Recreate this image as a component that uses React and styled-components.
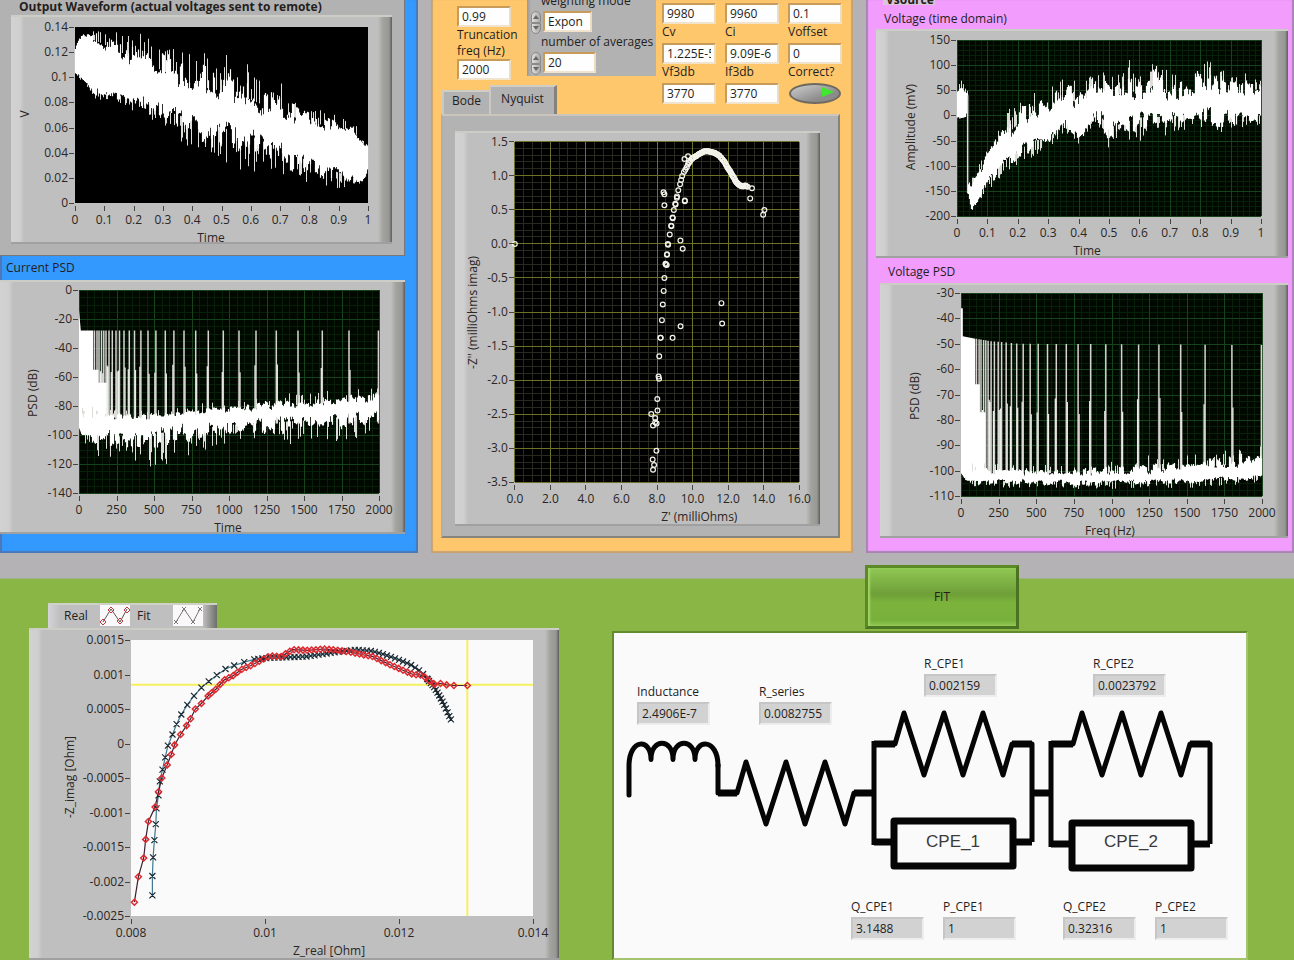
import React from 'react';
import styled, { createGlobalStyle } from 'styled-components';

const Global = createGlobalStyle`
  * { box-sizing: border-box; }
  body {
    margin: 0;
    background: #b4b2b4;
    color: #231e1c;
    font: 12px/16px "Open Sans", "Noto Sans", sans-serif;
  }
  input, button, output { font: inherit; color: inherit; }
`;

/* ---------- numeric helpers ---------- */

const random = (seed) => {
  let s = seed;
  return () => {
    s = (s * 1664525 + 1013904223) % 4294967296;
    return s / 4294967296;
  };
};

const interp = (pts, x) => {
  if (x <= pts[0][0]) return pts[0][1];
  for (let i = 1; i < pts.length; i++) {
    if (x <= pts[i][0]) {
      const [x0, y0] = pts[i - 1];
      const [x1, y1] = pts[i];
      return y0 + ((y1 - y0) * (x - x0)) / (x1 - x0);
    }
  }
  return pts[pts.length - 1][1];
};

const range = (from, to, step) => {
  const out = [];
  const n = Math.round((to - from) / step);
  for (let i = 0; i <= n; i++) out.push(from + i * step);
  return out;
};

/* ---------- layout ---------- */

const Page = styled.main`
  min-height: 100vh;
  overflow: hidden;
`;

const TopRow = styled.div`
  display: grid;
  grid-template-columns: 418fr 422fr 428fr;
  gap: 13px;
  min-height: 553px;
  margin-bottom: 25px;
`;

const Panel = styled.section`
  background: ${(p) => p.$color};
  box-shadow: inset -2px -2px 1px ${(p) => p.$edge}, inset 2px 0 1px ${(p) => p.$edge};
`;

const SubPanel = styled.div`
  margin-right: 13px;
  padding: 0 12px 11px 11px;
  background: #b3b2b2;
  border-right: 1px solid #777;
  border-bottom: 1px solid #777;
`;

const ChartTitle = styled.h2`
  margin: 0;
  padding: ${(p) => p.$pad};
  font-size: 12px;
  line-height: ${(p) => (p.$bold ? 14 : 16)}px;
  font-weight: ${(p) => (p.$bold ? 700 : 400)};
`;

const Frame = styled.div`
  margin: ${(p) => p.$margin || '0'};
  background: linear-gradient(90deg, #d2d2d2 0, #cfcfcf 9px, #bfbfbf 13px, #bfbfbf calc(100% - 14px), #a2a29f calc(100% - 9px), #979794 calc(100% - 3px), #5c5c5c 100%);
  border-top: 2px solid #cdcdc8;
  border-bottom: 2px solid #a0a0a0;
`;

const ChartSvg = styled.svg`
  display: block;
  width: 100%;
  height: auto;
  margin: -2px 0;
  overflow: visible;
  font-size: 12px;
  fill: #2b2624;
`;

/* ---------- chart ---------- */

function Chart({ w, h, plot, x, y, bg, grid, xTitle, yTitle, yTitleX, yTitleY, xTitleX, label, children }) {
  const [px, py, pw, ph] = plot;
  const sx = (v) => px + ((v - x.min) / (x.max - x.min)) * pw;
  const sy = (v) => py + ((y.max - v) / (y.max - y.min)) * ph;
  const lines = (xs, ys) =>
    xs.map((v) => `M${Math.round(sx(v))} ${py}v${ph}`).join('') +
    ys.map((v) => `M${px} ${Math.round(sy(v))}h${pw}`).join('');
  const xt = range(x.min, x.max, x.step);
  const yt = range(y.min, y.max, y.step);
  return (
    <ChartSvg viewBox={`0 0 ${w} ${h}`} role="img" aria-label={label}>
      <rect x={px} y={py} width={pw} height={ph} fill={bg} />
      {grid && (
        <g fill="none" shapeRendering="crispEdges">
          <path stroke={grid.minor} d={lines(range(x.min, x.max, grid.dx), range(y.min, y.max, grid.dy))} />
          <path stroke={grid.major} d={lines(xt, yt)} />
        </g>
      )}
      {children(sx, sy)}
      <path
        stroke="#444"
        fill="none"
        shapeRendering="crispEdges"
        d={
          xt.map((v) => `M${Math.round(sx(v))} ${py + ph + 3}v5`).join('') +
          yt.map((v) => `M${px - 6} ${Math.round(sy(v))}h5`).join('')
        }
      />
      {xt.map((v) => (
        <text key={v} x={sx(v)} y={py + ph + 21} textAnchor="middle">{x.format(v)}</text>
      ))}
      {yt.map((v) => (
        <text key={v} x={px - 7} y={sy(v) + 4} textAnchor="end">{y.format(v)}</text>
      ))}
      <text x={xTitleX} y={py + ph + 39} textAnchor="middle">{xTitle}</text>
      <text transform={`translate(${yTitleX} ${yTitleY}) rotate(-90)`} textAnchor="middle">{yTitle}</text>
    </ChartSvg>
  );
}

/* Dense trace: a solid band whose edges wander in short bursts, with pixel-wide excursions on both sides. */
function NoiseTrace({ sx, sy, from, to, seed, top, bodyTop, bodyBottom, bottom, odds = 0.3, rough = 1 }) {
  const rnd = random(seed);
  const x0 = Math.round(sx(from));
  const x1 = Math.round(sx(to));
  let solid = '';
  let thin = '';
  let up = 0;
  let down = 0;
  let upLeft = 0;
  let downLeft = 0;
  for (let c = x0; c < x1; c++) {
    if (upLeft-- <= 0) {
      upLeft = Math.floor(rnd() * 4);
      up = rnd();
    }
    if (downLeft-- <= 0) {
      downLeft = Math.floor(rnd() * 4);
      down = rnd();
    }
    const v = from + ((to - from) * (c - x0)) / (x1 - x0);
    const bt = interp(bodyTop, v);
    const bb = interp(bodyBottom, v);
    const tt = interp(top, v);
    const ll = interp(bottom, v);
    const hi = bt + (tt - bt) * rough * (0.8 * up + 0.25 * rnd() - 0.35);
    const lo = bb + (ll - bb) * rough * (0.8 * down + 0.25 * rnd() - 0.35);
    solid += `M${c + 0.5} ${sy(hi).toFixed(1)}V${sy(lo).toFixed(1)}`;
    if (rnd() < odds) thin += `M${c + 0.5} ${sy(bt + (tt - bt) * (0.3 + 0.7 * rnd())).toFixed(1)}V${sy(bt).toFixed(1)}`;
    if (rnd() < odds) thin += `M${c + 0.5} ${sy(bb).toFixed(1)}V${sy(bb + (ll - bb) * (0.3 + 0.7 * rnd())).toFixed(1)}`;
  }
  return (
    <g fill="none">
      <path d={thin} stroke="#dcdcd8" />
      <path d={solid} stroke="#fff" strokeWidth="1.2" />
    </g>
  );
}

const TONES = [103, 120, 133, 150, 165, 180, 200, 222, 247, 270, 300, 335, 370, 413, 460, 513, 575, 633, 700, 778, 862, 962, 1067, 1180, 1315, 1460, 1622, 1800, 1996];

function Tones({ sx, sy, level, side, floor }) {
  const rnd = random(11);
  return (
    <g fill="none">
      <path
        stroke="#d6d3d0"
        strokeWidth="1.5"
        d={TONES.map((f) => `M${sx(f).toFixed(1)} ${sy(interp(level, f)).toFixed(1)}V${sy(floor)}`).join('')}
      />
      <path
        stroke="#ecece8"
        strokeWidth="1.3"
        d={TONES.slice(3, -1).map((f) => `M${(sx(f) + (rnd() > 0.5 ? 1 : -1)).toFixed(1)} ${sy(side + rnd() * 7 - 3).toFixed(1)}V${sy(floor)}`).join('')}
      />
    </g>
  );
}

const fixed = (n) => (v) => v.toFixed(n);
const plain = (v) => String(Number(v.toFixed(4)) + 0);
const green = { minor: '#06200a', major: '#17431c' };

function OutputWaveform() {
  return (
    <Chart label="Output waveform" w={381} h={229} plot={[64, 12, 293, 176]} bg="#000"
      x={{ min: 0, max: 1, step: 0.1, format: plain }} y={{ min: 0, max: 0.14, step: 0.02, format: plain }}
      xTitle="Time" xTitleX={200} yTitle="V" yTitleX={18} yTitleY={99}>
      {(sx, sy) => (
        <NoiseTrace sx={sx} sy={sy} from={0} to={1} seed={7} odds={0.25}
          top={[[0, 0.125], [0.02, 0.136], [0.1, 0.14], [0.2, 0.138], [0.28, 0.128], [0.38, 0.127], [0.47, 0.122], [0.6, 0.11], [0.7, 0.096], [0.8, 0.081], [0.9, 0.07], [0.95, 0.066], [0.99, 0.046], [1, 0.075]]}
          bodyTop={[[0, 0.121], [0.02, 0.133], [0.08, 0.128], [0.2, 0.115], [0.3, 0.105], [0.4, 0.094], [0.5, 0.089], [0.6, 0.082], [0.7, 0.072], [0.8, 0.064], [0.9, 0.06], [0.95, 0.057], [1, 0.042]]}
          bodyBottom={[[0, 0.105], [0.05, 0.092], [0.1, 0.087], [0.2, 0.084], [0.3, 0.074], [0.4, 0.066], [0.5, 0.06], [0.6, 0.053], [0.7, 0.043], [0.8, 0.033], [0.9, 0.024], [0.98, 0.018], [1, 0.028]]}
          bottom={[[0, 0.102], [0.07, 0.082], [0.15, 0.079], [0.22, 0.069], [0.32, 0.054], [0.45, 0.036], [0.54, 0.028], [0.62, 0.023], [0.72, 0.02], [0.82, 0.012], [0.92, 0.01], [1, 0.018]]} />
      )}
    </Chart>
  );
}

function CurrentPsd() {
  return (
    <Chart label="Current PSD" w={405} h={254} plot={[79, 10, 300, 203]} bg="#000800" grid={{ ...green, dx: 50, dy: 5 }}
      x={{ min: 0, max: 2000, step: 250, format: plain }} y={{ min: -140, max: 0, step: 20, format: plain }}
      xTitle="Time" xTitleX={228} yTitle="PSD (dB)" yTitleX={37} yTitleY={113}>
      {(sx, sy) => (
        <>
          <Tones sx={sx} sy={sy} level={[[0, -28], [2000, -28]]} side={-55} floor={-92} />
          <path fill="#fff" d={`M${sx(0)} ${sy(-14)}L${sx(12)} ${sy(-28)}H${sx(95)}V${sy(-55)}H${sx(130)}V${sy(-64)}H${sx(185)}V${sy(-100)}H${sx(20)}L${sx(0)} ${sy(-95)}z`} />
          <NoiseTrace sx={sx} sy={sy} from={10} to={2000} seed={23} odds={0.22} rough={0.7}
            top={[[0, -80], [400, -82], [700, -80], [1000, -75], [1250, -70], [1500, -71], [1800, -66], [2000, -66]]}
            bodyTop={[[0, -88], [500, -88], [1000, -83], [1500, -79], [2000, -75]]}
            bodyBottom={[[0, -98], [250, -101], [500, -99], [1000, -93], [1500, -90], [2000, -85]]}
            bottom={[[0, -102], [110, -116], [250, -118], [540, -123], [660, -118], [900, -109], [1100, -105], [1300, -113], [1450, -104], [1780, -106], [2000, -98]]} />
        </>
      )}
    </Chart>
  );
}

function VoltageTime() {
  return (
    <Chart label="Voltage (time domain)" w={412} h={229} plot={[81, 11, 304, 176]} bg="#000800" grid={{ ...green, dx: 0.02, dy: 10 }}
      x={{ min: 0, max: 1, step: 0.1, format: plain }} y={{ min: -200, max: 150, step: 50, format: plain }}
      xTitle="Time" xTitleX={211} yTitle="Amplitude (mV)" yTitleX={39} yTitleY={98}>
      {(sx, sy) => (
        <>
          <NoiseTrace sx={sx} sy={sy} from={0} to={0.035} seed={3} odds={0.4}
            top={[[0, 60], [0.01, 78], [0.02, 72], [0.035, 44]]} bodyTop={[[0, 45], [0.01, 58], [0.035, 40]]}
            bodyBottom={[[0, 0], [0.035, 2]]} bottom={[[0, -9], [0.035, -8]]} />
          <path d={`M${sx(0.035)} ${sy(40)}V${sy(-155)}`} stroke="#ddd" strokeWidth="1.5" />
          <NoiseTrace sx={sx} sy={sy} from={0.035} to={1} seed={41} odds={0.3}
            top={[[0.035, -130], [0.06, -110], [0.1, -60], [0.16, 8], [0.24, 50], [0.3, 52], [0.33, 78], [0.4, 72], [0.45, 100], [0.5, 84], [0.57, 116], [0.61, 70], [0.65, 120], [0.7, 84], [0.75, 90], [0.79, 106], [0.85, 116], [0.9, 78], [0.94, 90], [1, 76]]}
            bodyTop={[[0.035, -148], [0.06, -128], [0.1, -82], [0.15, -45], [0.2, -16], [0.25, 4], [0.3, 8], [0.35, 40], [0.4, 22], [0.46, 56], [0.5, 24], [0.56, 58], [0.6, 34], [0.65, 64], [0.71, 32], [0.78, 54], [0.85, 56], [0.9, 48], [1, 52]]}
            bodyBottom={[[0.035, -158], [0.045, -186], [0.07, -162], [0.1, -126], [0.15, -92], [0.2, -70], [0.25, -50], [0.3, -46], [0.35, -10], [0.4, -30], [0.46, 6], [0.5, -24], [0.6, -4], [0.7, -2], [0.8, 4], [0.9, -2], [1, 0]]}
            bottom={[[0.035, -170], [0.045, -196], [0.08, -165], [0.12, -142], [0.16, -112], [0.21, -94], [0.3, -66], [0.35, -34], [0.41, -64], [0.45, -20], [0.5, -68], [0.54, -30], [0.59, -66], [0.65, -26], [0.7, -48], [0.78, -22], [0.83, -46], [0.9, -38], [1, -20]]} />
        </>
      )}
    </Chart>
  );
}

function VoltagePsd() {
  return (
    <Chart label="Voltage PSD" w={408} h={255} plot={[81, 10, 301, 203]} bg="#000800" grid={{ ...green, dx: 50, dy: 2.5 }}
      x={{ min: 0, max: 2000, step: 250, format: plain }} y={{ min: -110, max: -30, step: 10, format: plain }}
      xTitle="Freq (Hz)" xTitleX={230} yTitle="PSD (dB)" yTitleX={39} yTitleY={113}>
      {(sx, sy) => (
        <>
          <Tones sx={sx} sy={sy} level={[[0, -47], [200, -49], [400, -50], [2000, -50.5]]} side={-75} floor={-102} />
          <path fill="#fff" d={`M${sx(0)} ${sy(-36)}H${sx(12)}V${sy(-47)}L${sx(95)} ${sy(-48)}V${sy(-66)}H${sx(125)}V${sy(-77)}H${sx(162)}V${sy(-104)}H${sx(40)}L${sx(0)} ${sy(-101)}z`} />
          <NoiseTrace sx={sx} sy={sy} from={10} to={2000} seed={57} odds={0.24} rough={0.8}
            top={[[0, -96], [700, -98], [1100, -94], [1500, -94], [2000, -88]]}
            bodyTop={[[0, -101], [900, -101], [1300, -100], [1600, -99], [2000, -96]]}
            bodyBottom={[[0, -101], [60, -104], [900, -104.5], [1500, -103.5], [2000, -102]]}
            bottom={[[0, -104], [80, -107], [800, -107.5], [1500, -107], [2000, -105]]} />
        </>
      )}
    </Chart>
  );
}

const NYQUIST_ARC = [[9.8, 1.19], [9.88, 1.22], [9.96, 1.25], [10.05, 1.27], [10.2, 1.29], [10.35, 1.32], [10.5, 1.34], [10.65, 1.36], [10.8, 1.365], [10.95, 1.36], [11.1, 1.35], [11.25, 1.34], [11.38, 1.32], [11.5, 1.3], [11.6, 1.27], [11.7, 1.24], [11.8, 1.21], [11.88, 1.17], [11.96, 1.13], [12.04, 1.1], [12.12, 1.07], [12.2, 1.03], [12.26, 1], [12.32, 0.98], [12.38, 0.95], [12.44, 0.92], [12.5, 0.9], [12.58, 0.88], [12.68, 0.86], [12.78, 0.85], [12.88, 0.85], [12.98, 0.86], [13.1, 0.84], [13.35, 0.82]];

const NYQUIST_POINTS = [
  [0, 0], [8.37, 0.76], [8.42, 0.73], [8.42, 0.57], [9.55, 1.25], [9.75, 1.29], [9.57, 0.64], [9.57, 0.63], [9.32, 0.05], [9.45, -0.07],
  [13.25, 0.67], [14.05, 0.5], [13.98, 0.43], [11.63, -0.87], [11.67, -1.17], [9.33, -1.21], [8.88, -1.38],
  [7.76, -3.17], [7.84, -3.25], [7.78, -3.32], [7.97, -3.04], [7.78, -2.67], [7.98, -2.64], [7.9, -2.56], [7.9, -2.62], [7.68, -2.5],
  [8.03, -2.45], [8.02, -2.28], [8.12, -1.98], [8.09, -1.95], [8.13, -1.65], [8.2, -1.38], [8.21, -1.38], [8.28, -1.12], [8.33, -0.89],
  [8.38, -0.69], [8.42, -0.5], [8.5, -0.3], [8.55, -0.31], [8.48, -0.29], [8.56, -0.16], [8.57, -0.15], [8.61, 0], [8.63, -0.01], [8.72, 0.14],
  [8.8, 0.27], [8.81, 0.26], [8.88, 0.39], [8.89, 0.38], [8.95, 0.5], [9.03, 0.59], [9.05, 0.58], [9.13, 0.7], [9.12, 0.68], [9.2, 0.79],
  [9.3, 0.88], [9.36, 0.94], [9.42, 1], [9.52, 1.06], [9.6, 1.09], [9.68, 1.13], [9.74, 1.17], [9.8, 1.2], ...NYQUIST_ARC,
  ...range(10, 13, 0.08).map((x) => [x, interp(NYQUIST_ARC, x)]),
];

function Nyquist() {
  return (
    <Chart label="Nyquist" w={366} h={396} plot={[60, 11, 285, 341]} bg="#000"
      grid={{ minor: '#29291f', major: '#6e7226', dx: 0.5, dy: 0.1 }}
      x={{ min: 0, max: 16, step: 2, format: fixed(1) }} y={{ min: -3.5, max: 1.5, step: 0.5, format: fixed(1) }}
      xTitle="Z' (milliOhms)" xTitleX={245} yTitle="-Z'' (milliOhms imag)" yTitleX={22} yTitleY={182}>
      {(sx, sy) => (
        <g fill="none" stroke="#f4f4ec" strokeWidth="1.2">
          {NYQUIST_POINTS.map(([a, b], i) => (
            <circle key={i} cx={sx(a)} cy={sy(b)} r="2.4" />
          ))}
        </g>
      )}
    </Chart>
  );
}

const REAL = [[8.05, -2.3], [8.11, -1.93], [8.19, -1.66], [8.22, -1.39], [8.26, -1.13], [8.36, -0.92], [8.41, -0.7], [8.46, -0.5], [8.54, -0.31], [8.6, -0.16], [8.65, -0.02], [8.74, 0.13], [8.83, 0.26], [8.89, 0.36], [8.96, 0.5], [9.05, 0.58], [9.15, 0.69], [9.27, 0.79], [9.39, 0.92], [9.52, 0.98], [9.64, 1.07], [9.79, 1.13], [9.95, 1.21], [10.07, 1.27], [10.24, 1.26], [10.41, 1.36], [10.64, 1.35], [10.89, 1.37], [11.1, 1.35], [11.3, 1.32], [11.44, 1.29], [11.61, 1.26], [11.76, 1.19], [11.87, 1.14], [12.04, 1.07], [12.21, 1], [12.35, 0.99], [12.45, 0.91], [12.53, 0.86], [12.62, 0.87], [12.71, 0.85], [12.82, 0.84], [13.02, 0.84]];
const FIT = [[8.32, -2.2], [8.32, -1.92], [8.33, -1.65], [8.35, -1.4], [8.37, -1.17], [8.38, -0.94], [8.41, -0.75], [8.43, -0.55], [8.47, -0.38], [8.51, -0.2], [8.55, -0.03], [8.62, 0.13], [8.68, 0.28], [8.75, 0.42], [8.84, 0.56], [8.94, 0.69], [9.05, 0.81], [9.16, 0.9], [9.28, 0.99], [9.41, 1.08], [9.54, 1.13], [9.69, 1.18], [9.84, 1.22], [10.04, 1.24], [10.33, 1.25], [10.61, 1.26], [10.96, 1.31], [11.36, 1.36], [11.59, 1.34], [11.78, 1.29], [11.98, 1.22], [12.16, 1.15], [12.33, 1.04], [12.43, 0.93], [12.53, 0.81], [12.61, 0.68], [12.68, 0.55], [12.74, 0.42], [12.77, 0.35]];

const densify = (pts, from, to, gap) => [
  ...pts.filter(([x]) => x < from || x > to),
  ...range(from, to, gap).map((x) => [x, interp(pts, x)]),
];

function FitChart() {
  return (
    <Chart label="Fit result" w={530} h={332} plot={[102, 12, 402, 276]} bg="#fbfafb"
      x={{ min: 8, max: 14, step: 2, format: (v) => plain(v / 1000) }} y={{ min: -2.5, max: 1.5, step: 0.5, format: (v) => plain(v / 1000) }}
      xTitle="Z_real [Ohm]" xTitleX={300} yTitle="-Z_imag [Ohm]" yTitleX={45} yTitleY={149}>
      {(sx, sy) => {
        const path = (pts) => 'M' + pts.map(([a, b]) => `${sx(a).toFixed(1)} ${sy(b).toFixed(1)}`).join('L');
        return (
          <g fill="none">
            <path stroke="#f7f05e" strokeWidth="2" d={`M${sx(8)} ${sy(0.85)}H${sx(14)}M${sx(13.02)} ${sy(1.5)}V${sy(-2.5)}`} />
            <path stroke="#3f7890" strokeWidth="1.2" d={path(FIT)} />
            <path stroke="#3a2030" strokeWidth="1.2" d={path(REAL)} />
            <path
              stroke="#1c2830"
              strokeWidth="1.2"
              d={densify(densify(FIT, 12.45, 12.77, 0.025), 9.84, 12.42, 0.06).map(([a, b]) => `M${(sx(a) - 3).toFixed(1)} ${(sy(b) - 3).toFixed(1)}l6 6m0 -6l-6 6`).join('')}
            />
            <path
              stroke="#dd2a30"
              strokeWidth="1.5"
              d={densify(REAL, 9.2, 12.5, 0.065).map(([a, b]) => `M${sx(a).toFixed(1)} ${(sy(b) - 3).toFixed(1)}l3 3l-3 3l-3 -3z`).join('')}
            />
          </g>
        );
      }}
    </Chart>
  );
}

/* ---------- centre controls ---------- */

const Controls = styled.div`
  display: flex;
  justify-content: space-between;
  height: 114px;
  padding: 0 9px 0 11px;
`;

const LeftControls = styled.div`
  display: flex;
  flex-direction: column;
  justify-content: space-between;
`;

const LeftFields = styled.div`
  display: flex;
  align-items: flex-start;
  gap: 7px;
  padding-left: 15px;
`;

const FieldStack = styled.div`
  display: flex;
  flex-direction: column;
  width: 63px;
  padding-top: 6px;
`;

const Label = styled.label`
  display: block;
  padding-bottom: ${(p) => p.$gap || 0}px;
  line-height: ${(p) => p.$line || 16}px;
  white-space: nowrap;
`;

const TextBox = styled.input`
  display: block;
  width: ${(p) => p.$width || 54}px;
  height: 21px;
  padding: 0 3px;
  border: 2px solid;
  border-color: #c89b58 #ecdcc0 #f2e4cc #c89b58;
  border-radius: 0;
  background: #fefefe;
  outline: none;
`;

const AverageBox = styled.div`
  width: 129px;
  height: 76px;
  padding: 0 0 0 4px;
  background: linear-gradient(90deg, #9c9894 0, #b3b2b2 4px);
`;

const SpinRow = styled.div`
  display: flex;
  gap: 2px;
  height: 21px;
`;

const Indented = styled(Label)`
  padding-left: 10px;
  margin-top: ${(p) => p.$shift || 0}px;
`;

const Spinner = styled.span`
  display: flex;
  flex-direction: column;
  width: 10px;
  height: 23px;
`;

const SpinButton = styled.button`
  flex: 1;
  display: grid;
  place-items: center;
  padding: 0;
  border: 1px solid #8c8a88;
  border-radius: ${(p) => (p.$down ? '1px 1px 5px 5px' : '5px 5px 1px 1px')};
  background: linear-gradient(90deg, #dedede, #aaa);
`;

const RightFields = styled.div`
  display: grid;
  grid-template-columns: 54px 54px 56px;
  gap: 0 9px;
  align-content: start;
  padding-top: 3px;
`;

const Toggle = styled.button`
  display: block;
  width: 52px;
  height: 21px;
  margin-left: 1px;
  padding: 0;
  border: 2px solid #6f6a60;
  border-radius: 50%;
  background: linear-gradient(160deg, #cfcfcf, #8b8b8b 70%);
`;

const Tabs = styled.div`
  display: flex;
  align-items: flex-end;
`;

const Tab = styled.button`
  height: ${(p) => (p.$active ? 29 : 24)}px;
  width: ${(p) => (p.$active ? 68 : 47)}px;
  padding: 0 0 4px;
  border: 0;
  border-top: 2px solid #d0ccc6;
  border-left: 2px solid #ccc8c4;
  border-right: ${(p) => (p.$active ? '3px solid #85827e' : '0')};
  background: #b3b2b2;
`;

const TabPage = styled.div`
  margin: 0 13px 0 10px;
  padding: 15px 18px 10px 12px;
  background: #b4b3b3;
  border: 2px solid;
  border-color: #cac6be #86827c #86827c #b0aeb4;
`;

function Spin({ name }) {
  return (
    <Spinner>
      <SpinButton type="button" aria-label={`Increase ${name}`}>
        <svg width="6" height="4"><path d="M0 4L3 0L6 4z" fill="#666" /></svg>
      </SpinButton>
      <SpinButton type="button" $down aria-label={`Decrease ${name}`}>
        <svg width="6" height="4"><path d="M0 0L3 4L6 0z" fill="#666" /></svg>
      </SpinButton>
    </Spinner>
  );
}

function Field({ id, label, name, value }) {
  return (
    <div>
      {label && <Label htmlFor={id} $gap={3}>{label}</Label>}
      <TextBox id={id} defaultValue={value} aria-label={name} />
    </div>
  );
}

function CentrePanel() {
  return (
    <Panel $color="#ffc76c" $edge="#c9a274">
      <Controls>
        <LeftControls>
          <LeftFields>
            <FieldStack>
              <TextBox defaultValue="0.99" aria-label="Factor" />
              <Label htmlFor="trunc" $line={16}>Truncation<br />freq (Hz)</Label>
              <TextBox id="trunc" defaultValue="2000" />
            </FieldStack>
            <AverageBox>
              <Indented htmlFor="mode" $line={20} $shift={-9}>weighting mode</Indented>
              <SpinRow>
                <Spin name="weighting mode" />
                <TextBox id="mode" $width={49} defaultValue="Expon" />
              </SpinRow>
              <Indented htmlFor="avg" $line={20}>number of averages</Indented>
              <SpinRow>
                <Spin name="number of averages" />
                <TextBox id="avg" $width={53} defaultValue="20" />
              </SpinRow>
            </AverageBox>
          </LeftFields>
          <Tabs role="tablist">
            <Tab type="button" role="tab" aria-selected="false">Bode</Tab>
            <Tab type="button" role="tab" aria-selected="true" $active>Nyquist</Tab>
          </Tabs>
        </LeftControls>
        <RightFields>
          <Field id="rv" name="Rv" value="9980" />
          <Field id="ri" name="Ri" value="9960" />
          <Field id="scale" name="Scale" value="0.1" />
          <Field id="cv" label="Cv" value="1.225E-5" />
          <Field id="ci" label="Ci" value="9.09E-6" />
          <Field id="voffset" label="Voffset" value="0" />
          <Field id="vf" label="Vf3db" value="3770" />
          <Field id="if" label="If3db" value="3770" />
          <div>
            <Label htmlFor="correct" $gap={3}>Correct?</Label>
            <Toggle id="correct" type="button" aria-pressed="true">
              <svg width="48" height="15"><path d="M31 2L43 7L31 12z" fill="#3ee82c" /></svg>
            </Toggle>
          </div>
        </RightFields>
      </Controls>
      <TabPage>
        <Frame><Nyquist /></Frame>
      </TabPage>
    </Panel>
  );
}

/* ---------- right panel ---------- */

const SourceTag = styled.div`
  width: 52px;
  height: 5px;
  margin-left: 17px;
  padding-left: 3px;
  background: #d9c6d6;
  font-weight: 700;
  line-height: 0;
`;

/* ---------- fit section ---------- */

const FitSection = styled.section`
  display: grid;
  grid-template-columns: 29fr 530fr 53fr 636fr 46fr;
  background: #8ab645;
  border-top: 1px solid #9db088;
`;

const FitLeft = styled.div`
  grid-column: 2;
  padding-top: 24px;
`;

const Legend = styled.div`
  display: flex;
  align-items: center;
  width: 169px;
  height: 25px;
  margin-left: 19px;
  padding: 0 0 2px 16px;
  background: linear-gradient(90deg, #d4d4d8, #bfbfbf 12px, #bfbfbf 155px, #6d6d6a);
  border-top: 2px solid #cfd0c8;
`;

const LegendName = styled.span`
  width: 36px;
`;

const Swatch = styled.svg`
  width: 30px;
  height: 21px;
  margin-right: 7px;
  background: #fbf8fa;
  fill: none;
`;

const FitRight = styled.div`
  grid-column: 4;
  margin-top: -14px;
`;

const FitButton = styled.button`
  display: block;
  width: 154px;
  height: 64px;
  margin: 0 0 2px 253px;
  border: 3px solid;
  border-color: #5b8a25 #4a7421 #4a7421 #5b8a25;
  background: linear-gradient(#90c854, #6f9f38 45%, #7cb33c 60%, #78b03c 90%, #8fc750);
  box-shadow: inset 2px 0 2px #a4d468;
`;

const Circuit = styled.div`
  padding-bottom: 18px;
  background: #fbfafb;
  border: 2px solid;
  border-color: #638a2c #a5c470 #a5c470 #638a2c;
`;

const ReadoutRow = styled.div`
  display: grid;
  grid-template-columns: ${(p) => p.$columns};
  align-items: end;
  padding-top: ${(p) => p.$top}px;
`;

const ReadoutBox = styled.div`
  grid-column: ${(p) => p.$col};
  padding-bottom: ${(p) => p.$raise || 0}px;

  label {
    display: block;
    line-height: 16px;
    margin-bottom: 2px;
  }

  output {
    display: block;
    width: 73px;
    height: 23px;
    padding-left: 3px;
    background: #d3d2d3;
    border: 2px solid;
    border-color: #c6c6c6 #ededed #ededed #c6c6c6;
    line-height: 19px;
  }
`;

const CircuitDrawing = styled.svg`
  display: block;
  width: 100%;
  height: auto;
  margin-top: -17px;
  fill: none;
  stroke: #050505;
  stroke-linejoin: round;
`;

const CpeText = styled.text`
  fill: #3a3a3a;
  stroke: none;
  font: 17px "Liberation Sans", Arial, sans-serif;
`;

function Readout({ id, label, value, col, raise }) {
  return (
    <ReadoutBox $col={col} $raise={raise}>
      <label htmlFor={id}>{label}</label>
      <output id={id}>{value}</output>
    </ReadoutBox>
  );
}

const zigzag = (x, y) => `L${x} ${y}l9 -31l20 62l20 -62l19 62l20 -62l20 62l9 -31`;

function CircuitPanel() {
  return (
    <Circuit>
      <ReadoutRow $top={23} $columns="23fr 122fr 165fr 169fr 153fr">
        <Readout id="ind" label="Inductance" value="2.4906E-7" col={2} />
        <Readout id="rs" label="R_series" value="0.0082755" col={3} />
        <Readout id="rc1" label="R_CPE1" value="0.002159" col={4} raise={28} />
        <Readout id="rc2" label="R_CPE2" value="0.0023792" col={5} raise={28} />
      </ReadoutRow>
      <CircuitDrawing viewBox="614 708 632 172" role="img" aria-label="Equivalent circuit">
        <path strokeWidth="5" strokeLinecap="round" d="M629 795V766C629 738 651 738 651 759C651 738 673 738 673 759C673 738 695 738 695 759C695 738 718 738 718 766" />
        <path strokeWidth="5" d={`M718 764V793H737${zigzag(737, 793)}H874`} />
        <path strokeWidth="4" strokeLinecap="round" d="M651 753V760M673 753V760M695 753V760" />
        <path strokeWidth="7" d="M718 793H737M854 793H874M1032 793H1051M874 744H895M1012 744H1032M874 842H894M1012 842H1032M1051 744H1073M1190 744H1210M1051 844H1072M1190 844H1210" />
        <path strokeWidth="5" d={`M874 744${zigzag(895, 744)}H1032V842M874 741V845M1051 744${zigzag(1073, 744)}H1210V844M1051 741V847`} />
        <rect x="894" y="821" width="119" height="45" strokeWidth="7" />
        <rect x="1072" y="823" width="119" height="45" strokeWidth="7" />
        <CpeText x="953" y="847" textAnchor="middle">CPE_1</CpeText>
        <CpeText x="1131" y="847" textAnchor="middle">CPE_2</CpeText>
      </CircuitDrawing>
      <ReadoutRow $top={19} $columns="237fr 92fr 120fr 92fr 91fr">
        <Readout id="q1" label="Q_CPE1" value="3.1488" col={2} />
        <Readout id="p1" label="P_CPE1" value="1" col={3} />
        <Readout id="q2" label="Q_CPE2" value="0.32316" col={4} />
        <Readout id="p2" label="P_CPE2" value="1" col={5} />
      </ReadoutRow>
    </Circuit>
  );
}

export default function App() {
  return (
    <Page>
      <Global />
      <TopRow>
        <Panel $color="#3399ff" $edge="#4a78b8">
          <SubPanel>
            <ChartTitle $bold $pad="0 0 1px 8px">Output Waveform (actual voltages sent to remote)</ChartTitle>
            <Frame><OutputWaveform /></Frame>
          </SubPanel>
          <ChartTitle $pad="4px 6px 4px">Current PSD</ChartTitle>
          <Frame $margin="0 13px 0 0"><CurrentPsd /></Frame>
        </Panel>
        <CentrePanel />
        <Panel $color="#f29cfd" $edge="#a884b4">
          <SourceTag>Vsource</SourceTag>
          <ChartTitle $pad="6px 18px 2px">Voltage (time domain)</ChartTitle>
          <Frame $margin="0 6px 0 10px"><VoltageTime /></Frame>
          <ChartTitle $pad="6px 22px 3px">Voltage PSD</ChartTitle>
          <Frame $margin="0 6px 0 14px"><VoltagePsd /></Frame>
        </Panel>
      </TopRow>
      <FitSection>
        <FitLeft>
          <Legend>
            <LegendName>Real</LegendName>
            <Swatch viewBox="0 0 30 21">
              <path d="M3 17L11 4L20 17L27 4" stroke="#555" />
              <path d="M3 14l3 3l-3 3l-3 -3zM11 2l3 3l-3 3l-3 -3zM20 13l3 3l-3 3l-3 -3zM27 2l3 3l-3 3l-3 -3z" stroke="#c8323a" />
            </Swatch>
            <LegendName>Fit</LegendName>
            <Swatch viewBox="0 0 30 21">
              <path d="M3 17L11 4L20 17L27 4M1 15l4 4m0 -4l-4 4M9 2l4 4m0 -4l-4 4M18 15l4 4m0 -4l-4 4M25 2l4 4m0 -4l-4 4" stroke="#777" />
            </Swatch>
          </Legend>
          <Frame><FitChart /></Frame>
        </FitLeft>
        <FitRight>
          <FitButton type="button">FIT</FitButton>
          <CircuitPanel />
        </FitRight>
      </FitSection>
    </Page>
  );
}
